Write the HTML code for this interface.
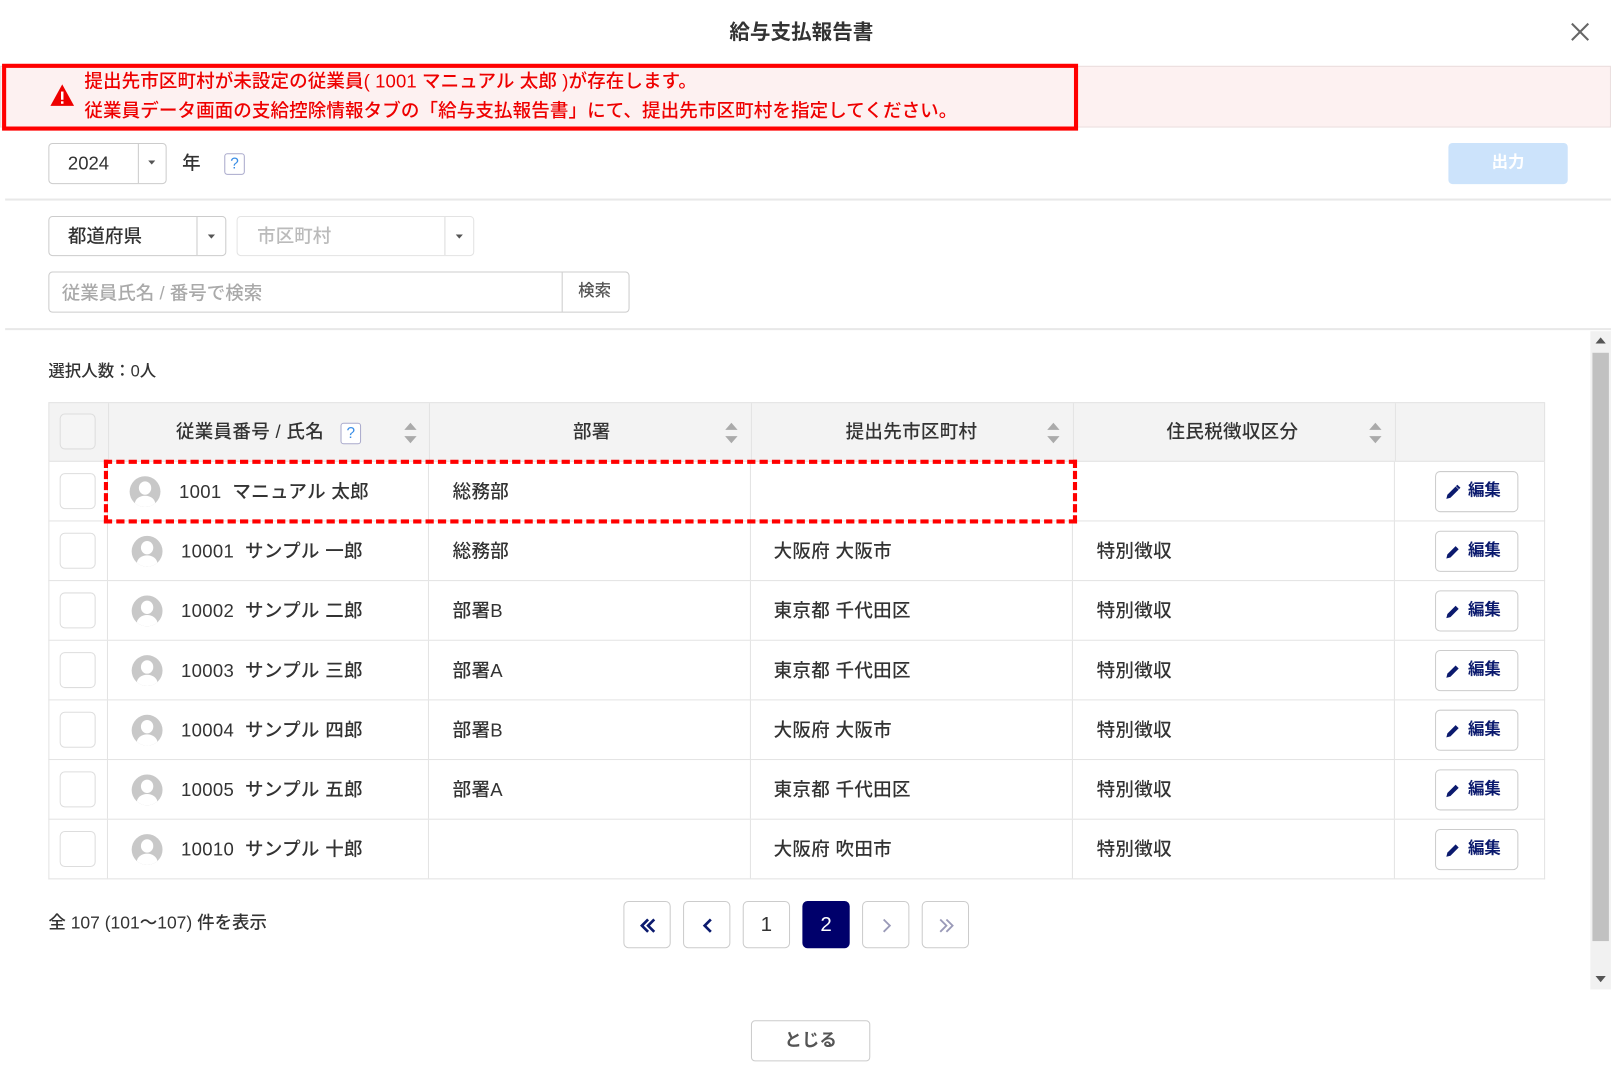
<!DOCTYPE html>
<html><head><meta charset="utf-8"><style>
html,body{margin:0;padding:0;background:#fff;overflow:hidden;width:1613px;height:1082px}
#w{position:absolute;left:0;top:0;width:1568px;height:1052px;transform:scale(1.0287,1.0285);transform-origin:0 0;font-family:"Liberation Sans","Noto Sans CJK JP",sans-serif;color:#333;font-weight:500}
.a{position:absolute}
.t{position:absolute;white-space:nowrap;line-height:1}
.box{position:absolute;border:1px solid #ccc;border-radius:4px;box-sizing:border-box;background:#fff}
.q{position:absolute;width:20px;height:21px;border:1px solid #aac;border-radius:3px;box-sizing:border-box;color:#3a8ee6;font-size:15px;text-align:center;line-height:19px;background:#fff}
.row{position:absolute;left:47px;width:1455px;height:58px;border-bottom:1px solid #e3e3e3;box-sizing:border-box}
.cb{position:absolute;left:11px;top:11px;width:35px;height:35px;border:1px solid #ddd;border-radius:5px;box-sizing:border-box;background:#fff}
.vl{position:absolute;top:0;width:1px;height:100%;background:#e3e3e3}
.cell{position:absolute;top:20px;font-size:18px;line-height:1;white-space:nowrap;color:#333;letter-spacing:0.3px}
.av{position:absolute;left:81px;top:14px;width:30px;height:30px;border-radius:50%;background:#c8c8c8;overflow:hidden}
.av:before{content:"";position:absolute;left:9px;top:5px;width:12px;height:13px;border-radius:50%;background:#fff}
.av:after{content:"";position:absolute;left:5px;top:19px;width:20px;height:16px;border-radius:50%;background:#fff}
.ed{position:absolute;left:1348px;top:9px;width:81px;height:40px;border:1px solid #ccc;border-radius:5px;box-sizing:border-box;background:#fff;color:#0b1a6e;font-weight:bold;font-size:16px;line-height:38px}
.ed svg{position:absolute;left:9px;top:12px}
.ed span{position:absolute;left:31px;top:0}
.sort{position:absolute;top:16px;width:14px;height:26px}
.pg{position:absolute;top:876px;width:46px;height:46px;border:1px solid #ccc;border-radius:5px;box-sizing:border-box;background:#fff;text-align:center;line-height:44px;font-size:20px}
.pg svg{position:absolute;left:13px;top:13px}
</style></head><body><div id="w">
<div class="t" style="left:709px;top:22px;font-size:20px;font-weight:bold;color:#333">給与支払報告書</div>
<svg class="a" style="left:1526px;top:21px" width="20" height="20"><path d="M2 2L18 18M18 2L2 18" stroke="#666" stroke-width="2"/></svg>

<div class="a" style="left:0;top:64px;width:1566px;height:60px;background:#fdf1f1;border:1px solid #eadede;box-sizing:border-box"></div>
<div class="a" style="left:2px;top:62px;width:1046px;height:65px;border:4px solid #f00;box-sizing:border-box"></div>
<svg class="a" style="left:48px;top:81px" width="25" height="23"><path d="M12.5 1L24 22H1Z" fill="#e00"/><rect x="11.3" y="8" width="2.4" height="8" fill="#fff"/><rect x="11.3" y="17.5" width="2.4" height="2.4" fill="#fff"/></svg>
<div class="t" style="left:82px;top:70px;font-size:18px;color:#e00;letter-spacing:0.1px">提出先市区町村が未設定の従業員( 1001 マニュアル 太郎 )が存在します。</div>
<div class="t" style="left:82px;top:99px;font-size:18px;color:#e00;letter-spacing:0.1px">従業員データ画面の支給控除情報タブの「給与支払報告書」にて、提出先市区町村を指定してください。</div>

<div class="box" style="left:47px;top:139px;width:115px;height:40px"></div>
<div class="a" style="left:134px;top:140px;width:1px;height:38px;background:#ccc"></div>
<div class="t" style="left:66px;top:150px;font-size:18px">2024</div>
<svg class="a" style="left:144px;top:156px" width="7" height="4"><path d="M0 0H7L3.5 4Z" fill="#555"/></svg>
<div class="t" style="left:177px;top:150px;font-size:18px">年</div>
<div class="q" style="left:218px;top:149px">?</div>
<div class="a" style="left:1408px;top:139px;width:116px;height:40px;background:#cce3fb;border-radius:4px;color:#fff;font-size:16px;font-weight:bold;text-align:center;line-height:40px">出力</div>
<div class="a" style="left:5px;top:193px;width:1561px;height:2px;background:#e8e8e8"></div>

<div class="box" style="left:47px;top:210px;width:173px;height:39px"></div>
<div class="a" style="left:191px;top:211px;width:1px;height:37px;background:#ccc"></div>
<div class="t" style="left:66px;top:221px;font-size:18px">都道府県</div>
<svg class="a" style="left:202px;top:228px" width="7" height="4"><path d="M0 0H7L3.5 4Z" fill="#555"/></svg>
<div class="box" style="left:230px;top:210px;width:231px;height:39px;border-color:#e3e3e3"></div>
<div class="a" style="left:432px;top:211px;width:1px;height:37px;background:#ddd"></div>
<div class="t" style="left:250px;top:221px;font-size:18px;color:#bbb">市区町村</div>
<svg class="a" style="left:443px;top:228px" width="7" height="4"><path d="M0 0H7L3.5 4Z" fill="#555"/></svg>

<div class="box" style="left:47px;top:264px;width:565px;height:40px"></div>
<div class="a" style="left:546px;top:265px;width:1px;height:38px;background:#ccc"></div>
<div class="t" style="left:60px;top:276px;font-size:18px;color:#aaa">従業員氏名 / 番号で検索</div>
<div class="t" style="left:562px;top:276px;font-size:16px;color:#555">検索</div>
<div class="a" style="left:5px;top:319px;width:1561px;height:2px;background:#e8e8e8"></div>

<div class="a" style="left:1546px;top:322px;width:20px;height:640px;background:#f1f1f1"></div>
<div class="a" style="left:1548px;top:343px;width:16px;height:572px;background:#c1c1c1"></div>
<svg class="a" style="left:1551px;top:328px" width="10" height="6"><path d="M0 6H10L5 0Z" fill="#555"/></svg>
<svg class="a" style="left:1551px;top:949px" width="10" height="6"><path d="M0 0H10L5 6Z" fill="#555"/></svg>

<div class="t" style="left:47px;top:354px;font-size:16px;color:#333">選択人数：0人</div>

<div class="a" style="left:47px;top:391px;width:1455px;height:58px;background:#f3f3f3;border:1px solid #e3e3e3;box-sizing:border-box">
<div class="cb" style="background:#f5f5f5;left:10px;top:10px"></div>
<div class="vl" style="left:57px"></div><div class="vl" style="left:369px"></div><div class="vl" style="left:682px"></div><div class="vl" style="left:995px"></div><div class="vl" style="left:1308px"></div>
<div class="cell" style="left:123px;top:19px">従業員番号 / 氏名</div>
<div class="q" style="left:283px;top:19px">?</div>
<div class="cell" style="left:509px;top:19px">部署</div>
<div class="cell" style="left:774px;top:19px">提出先市区町村</div>
<div class="cell" style="left:1086px;top:19px">住民税徴収区分</div>
<svg class="sort" style="left:344px"><path d="M1 10H13L7 3Z M1 16H13L7 23Z" fill="#aaa"/></svg>
<svg class="sort" style="left:656px"><path d="M1 10H13L7 3Z M1 16H13L7 23Z" fill="#aaa"/></svg>
<svg class="sort" style="left:969px"><path d="M1 10H13L7 3Z M1 16H13L7 23Z" fill="#aaa"/></svg>
<svg class="sort" style="left:1282px"><path d="M1 10H13L7 3Z M1 16H13L7 23Z" fill="#aaa"/></svg>
</div>

<div class="a" style="left:47px;top:449px;width:1px;height:406px;background:#e3e3e3"></div>
<div class="a" style="left:1501px;top:449px;width:1px;height:406px;background:#e3e3e3"></div>

<div class="row" style="top:449px"><div class="cb"></div><div class="vl" style="left:57px"></div><div class="vl" style="left:369px"></div><div class="vl" style="left:682px"></div><div class="vl" style="left:1308px"></div><div class="av" style="left:79px"></div><div class="cell" style="left:127px">1001&nbsp;&nbsp;マニュアル 太郎</div><div class="cell" style="left:393px">総務部</div><div class="ed"><svg width="15" height="15"><path d="M1 14L2 10L10 2L13 5L5 13Z" fill="#0b1a6e"/><path d="M11 1L14 4" stroke="#0b1a6e" stroke-width="2"/></svg><span>編集</span></div></div>
<div class="row" style="top:507px"><div class="cb"></div><div class="vl" style="left:57px"></div><div class="vl" style="left:369px"></div><div class="vl" style="left:682px"></div><div class="vl" style="left:995px"></div><div class="vl" style="left:1308px"></div><div class="av"></div><div class="cell" style="left:129px">10001&nbsp;&nbsp;サンプル 一郎</div><div class="cell" style="left:393px">総務部</div><div class="cell" style="left:705px">大阪府 大阪市</div><div class="cell" style="left:1019px">特別徴収</div><div class="ed"><svg width="15" height="15"><path d="M1 14L2 10L10 2L13 5L5 13Z" fill="#0b1a6e"/></svg><span>編集</span></div></div>
<div class="row" style="top:565px"><div class="cb"></div><div class="vl" style="left:57px"></div><div class="vl" style="left:369px"></div><div class="vl" style="left:682px"></div><div class="vl" style="left:995px"></div><div class="vl" style="left:1308px"></div><div class="av"></div><div class="cell" style="left:129px">10002&nbsp;&nbsp;サンプル 二郎</div><div class="cell" style="left:393px">部署B</div><div class="cell" style="left:705px">東京都 千代田区</div><div class="cell" style="left:1019px">特別徴収</div><div class="ed"><svg width="15" height="15"><path d="M1 14L2 10L10 2L13 5L5 13Z" fill="#0b1a6e"/></svg><span>編集</span></div></div>
<div class="row" style="top:623px"><div class="cb"></div><div class="vl" style="left:57px"></div><div class="vl" style="left:369px"></div><div class="vl" style="left:682px"></div><div class="vl" style="left:995px"></div><div class="vl" style="left:1308px"></div><div class="av"></div><div class="cell" style="left:129px">10003&nbsp;&nbsp;サンプル 三郎</div><div class="cell" style="left:393px">部署A</div><div class="cell" style="left:705px">東京都 千代田区</div><div class="cell" style="left:1019px">特別徴収</div><div class="ed"><svg width="15" height="15"><path d="M1 14L2 10L10 2L13 5L5 13Z" fill="#0b1a6e"/></svg><span>編集</span></div></div>
<div class="row" style="top:681px"><div class="cb"></div><div class="vl" style="left:57px"></div><div class="vl" style="left:369px"></div><div class="vl" style="left:682px"></div><div class="vl" style="left:995px"></div><div class="vl" style="left:1308px"></div><div class="av"></div><div class="cell" style="left:129px">10004&nbsp;&nbsp;サンプル 四郎</div><div class="cell" style="left:393px">部署B</div><div class="cell" style="left:705px">大阪府 大阪市</div><div class="cell" style="left:1019px">特別徴収</div><div class="ed"><svg width="15" height="15"><path d="M1 14L2 10L10 2L13 5L5 13Z" fill="#0b1a6e"/></svg><span>編集</span></div></div>
<div class="row" style="top:739px"><div class="cb"></div><div class="vl" style="left:57px"></div><div class="vl" style="left:369px"></div><div class="vl" style="left:682px"></div><div class="vl" style="left:995px"></div><div class="vl" style="left:1308px"></div><div class="av"></div><div class="cell" style="left:129px">10005&nbsp;&nbsp;サンプル 五郎</div><div class="cell" style="left:393px">部署A</div><div class="cell" style="left:705px">東京都 千代田区</div><div class="cell" style="left:1019px">特別徴収</div><div class="ed"><svg width="15" height="15"><path d="M1 14L2 10L10 2L13 5L5 13Z" fill="#0b1a6e"/></svg><span>編集</span></div></div>
<div class="row" style="top:797px"><div class="cb"></div><div class="vl" style="left:57px"></div><div class="vl" style="left:369px"></div><div class="vl" style="left:682px"></div><div class="vl" style="left:995px"></div><div class="vl" style="left:1308px"></div><div class="av"></div><div class="cell" style="left:129px">10010&nbsp;&nbsp;サンプル 十郎</div><div class="cell" style="left:705px">大阪府 吹田市</div><div class="cell" style="left:1019px">特別徴収</div><div class="ed"><svg width="15" height="15"><path d="M1 14L2 10L10 2L13 5L5 13Z" fill="#0b1a6e"/></svg><span>編集</span></div></div>

<div class="a" style="left:101px;top:447px;width:946px;height:62px;border:4px dashed #f00;box-sizing:border-box"></div>

<div class="t" style="left:47px;top:889px;font-size:17px">全 107 (101～107) 件を表示</div>
<div class="pg" style="left:606px"><svg width="20" height="20"><path d="M10 4L4 10L10 16M16 4L10 10L16 16" stroke="#0b1a6e" stroke-width="2.6" fill="none"/></svg></div>
<div class="pg" style="left:664px"><svg width="20" height="20"><path d="M13 4L7 10L13 16" stroke="#0b1a6e" stroke-width="2.6" fill="none"/></svg></div>
<div class="pg" style="left:722px;color:#333">1</div>
<div class="pg" style="left:780px;background:#00006b;border-color:#00006b;color:#fff">2</div>
<div class="pg" style="left:838px"><svg width="20" height="20"><path d="M7 4L13 10L7 16" stroke="#9a9ab8" stroke-width="1.8" fill="none"/></svg></div>
<div class="pg" style="left:896px"><svg width="20" height="20"><path d="M4 4L10 10L4 16M10 4L16 10L10 16" stroke="#9a9ab8" stroke-width="1.8" fill="none"/></svg></div>

<div class="box" style="left:730px;top:992px;width:116px;height:40px;text-align:center;line-height:38px;font-size:17px;font-weight:bold;color:#555">とじる</div>
</div></body></html>
